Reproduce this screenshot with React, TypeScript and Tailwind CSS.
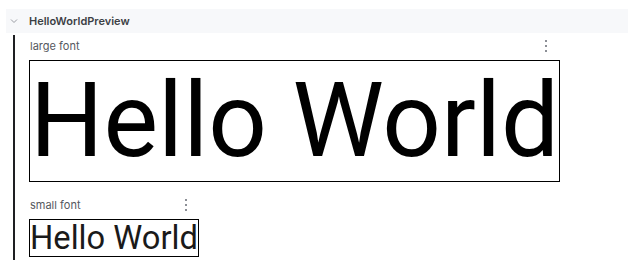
export default function App() {
  return (
    <div className="h-[269px] w-[638px] bg-white pt-[9px] font-['Inter',sans-serif]">
      {/* group header */}
      <div className="ml-[6px] mr-[10px] flex h-[24px] items-center bg-[#f7f8fa]">
        <svg className="ml-[4px] h-[8px] w-[8px]" viewBox="0 0 8 8" fill="none">
          <path d="M1 2.5 L4 5.5 L7 2.5" stroke="#9a9ca3" strokeWidth="1" />
        </svg>
        <span className="ml-[11px] text-[11px] font-semibold text-[#3c3f45]">
          HelloWorldPreview
        </span>
      </div>

      {/* previews */}
      <div className="ml-[13px] mt-[2px] flex h-[225px] border-l-2 border-[#1e1f22] pl-[14px]">
        <div className="flex flex-col">
          <Preview label="large font" dotsOffset="w-[530px]">
            <div className="border border-black bg-white font-['Roboto',sans-serif] text-[103px] leading-[120px] text-black">
              Hello World
            </div>
          </Preview>
          <div className="h-[12px]" />
          <Preview label="small font" dotsOffset="w-[170px]">
            <div className="border border-black bg-white font-['Roboto',sans-serif] text-[32.7px] leading-[36px] text-[#1a1a1a]">
              Hello World
            </div>
          </Preview>
        </div>
      </div>
    </div>
  );
}

function Preview({
  label,
  dotsOffset,
  children,
}: {
  label: string;
  dotsOffset: string;
  children: React.ReactNode;
}) {
  return (
    <div className="flex flex-col items-start">
      <div className={`flex h-[22px] items-center justify-between ${dotsOffset}`}>
        <span className="pl-[1px] text-[11px] text-[#55585e]">{label}</span>
        <div className="mr-[12px] flex flex-col gap-[3px]">
          <span className="block h-[2px] w-[2px] bg-[#8c8f96]" />
          <span className="block h-[2px] w-[2px] bg-[#8c8f96]" />
          <span className="block h-[2px] w-[2px] bg-[#8c8f96]" />
        </div>
      </div>
      <div className="mt-[3px] inline-flex">{children}</div>
    </div>
  );
}
